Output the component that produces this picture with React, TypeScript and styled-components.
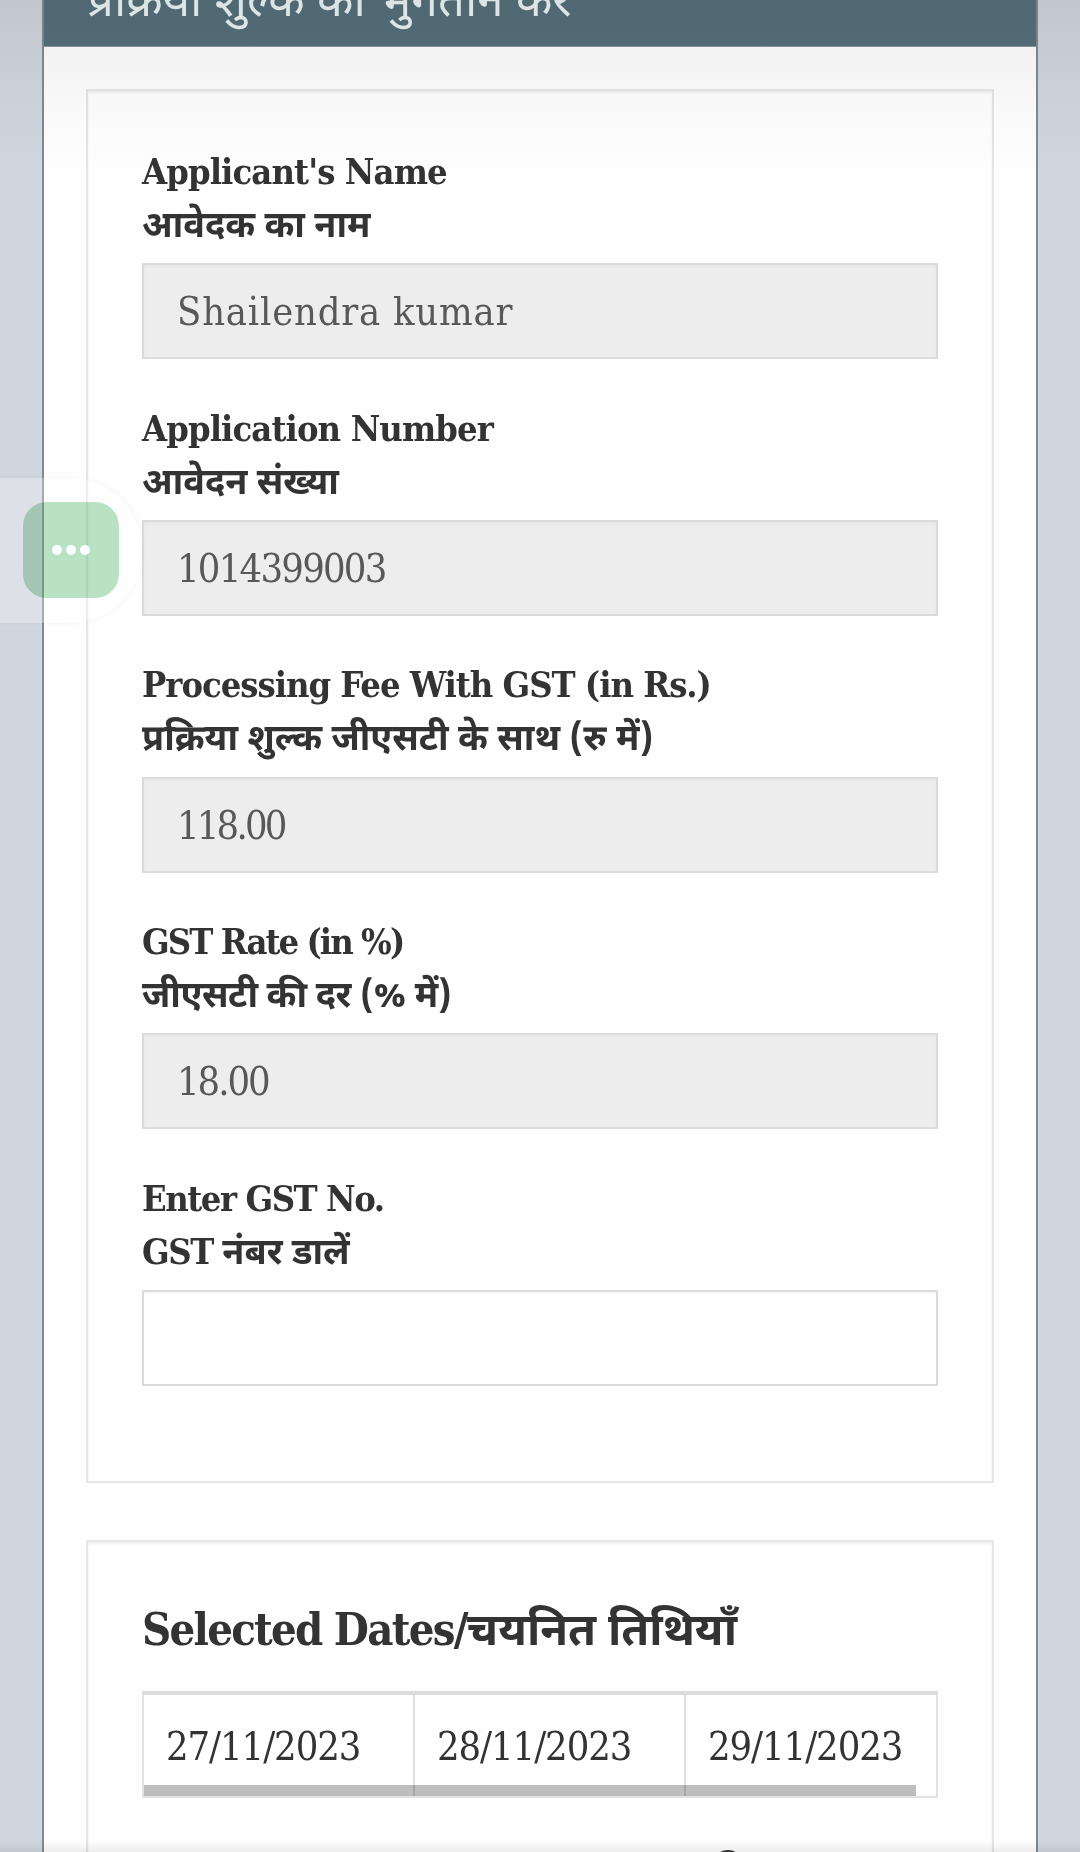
import React from "react";
import styled, { createGlobalStyle } from "styled-components";

const SERIF = '"DejaVu Serif Condensed", "Noto Sans Devanagari", "Noto Sans", serif';
const DEVANAGARI = '"Noto Sans Devanagari", "Noto Sans", sans-serif';

const GlobalStyle = createGlobalStyle`
  * { box-sizing: border-box; }
  html, body { margin: 0; padding: 0; background: #d1d5df; overflow: hidden; }
`;

const Screen = styled.div`
  position: relative;
  width: 1080px;
  height: 1852px;
  overflow: hidden;
  padding: 0 42px;
  background: #d1d5df;
  font-family: ${SERIF};
  color: #333;
`;

const Page = styled.main`
  width: 996px;
  height: 1852px;
  background: #fefefe;
  border: solid #7f8b94;
  border-width: 0 2px;
  display: flex;
  flex-direction: column;
  overflow: hidden;
`;

const TitleBar = styled.header`
  flex: none;
  height: 47px;
  display: flex;
  align-items: flex-end;
  padding: 0 44px 11px;
  margin: 0 -1px;
  overflow: hidden;
  background: #556f7a;
  border-bottom: 1px solid #8a999f;
`;

const Title = styled.h1`
  margin: 0;
  font: 400 47.4px/60px ${DEVANAGARI};
  color: #ecf5f6;
  white-space: nowrap;
`;

const Panel = styled.section<{ $gap: number; $height: number; $top: number }>`
  flex: none;
  width: 908px;
  height: ${(p) => p.$height}px;
  margin: ${(p) => p.$gap}px 0 0 42px;
  padding: ${(p) => p.$top}px 54px 0;
  border: 2px solid #e6e6e6;
  box-shadow: inset 0 2px 2px rgba(0, 0, 0, 0.05);
`;

const Field = styled.label`
  display: block;
  height: 256.7px;
`;

const LabelLine = styled.span<{ $spacing?: number }>`
  display: block;
  height: 52px;
  font-size: 36px;
  font-weight: 700;
  line-height: 51px;
  letter-spacing: ${(p) => p.$spacing ?? 0}px;
  white-space: nowrap;
`;

const HindiLine = styled(LabelLine)<{ $mixed?: boolean }>`
  padding-top: ${(p) => (p.$mixed ? 0 : 5)}px;
  line-height: 52px;
  font-family: ${DEVANAGARI};
`;

const Latin = styled.span`
  font-family: ${SERIF};
  letter-spacing: -1.4px;
`;

const Input = styled.input<{ $spacing: number }>`
  display: block;
  width: 796px;
  height: 96px;
  margin-top: 13.4px;
  padding: 0 33px;
  border: 2px solid #dbdbdb;
  border-radius: 0;
  outline: 0;
  background: #fff;
  box-shadow: inset 0 2px 3px rgba(0, 0, 0, 0.03);
  color: #585858;
  font: 400 39.5px ${SERIF};
  letter-spacing: ${(p) => p.$spacing}px;

  &:read-only {
    background: #ededed;
  }
`;

const Heading = styled.h2`
  margin: 0;
  height: 66px;
  font: 700 45px/66px ${SERIF};
  letter-spacing: -1.75px;
  white-space: nowrap;
`;

const HeadingHindi = styled.span`
  font-family: ${DEVANAGARI};
  font-size: 45.3px;
  letter-spacing: 0;
`;

const TableScroller = styled.div`
  position: relative;
  width: 796px;
  height: 107px;
  margin-top: 28px;
  border: 2px solid #e2e2e2;
  border-top: 4px solid #dcdcdc;
  overflow: hidden;
`;

const DateRow = styled.div`
  display: grid;
  grid-template-columns: 271px 271px 271px;
  height: 100%;
`;

const DateCell = styled.div`
  padding: 24px 0 0 22px;
  border-right: 2px solid #dedede;
  font-size: 39.5px;
  line-height: 54px;
  letter-spacing: -1.05px;
  white-space: nowrap;
`;

const ScrollThumb = styled.div`
  position: absolute;
  left: 0;
  bottom: 0;
  width: 772px;
  height: 11px;
  background: rgba(0, 0, 0, 0.25);
`;

const Handle = styled.div`
  position: absolute;
  left: -10px;
  top: 478px;
  width: 152px;
  height: 145px;
  border-radius: 0 72px 72px 0;
  background: rgba(254, 254, 254, 0.28);
  box-shadow: 0 0 9px rgba(0, 0, 0, 0.035);
`;

const HandleTile = styled.div`
  position: absolute;
  left: 23px;
  top: 501.5px;
  width: 96px;
  height: 96px;
  border-radius: 24px;
  background: #bae2c5;
  mix-blend-mode: multiply;
`;

const HandleDots = styled.div`
  position: absolute;
  left: 23px;
  top: 501px;
  width: 96px;
  height: 97px;
  display: flex;
  align-items: center;
  justify-content: center;
  gap: 4px;
`;

const Dot = styled.i`
  width: 10px;
  height: 10px;
  border-radius: 50%;
  background: rgba(255, 255, 255, 0.96);
`;

const TopShade = styled.div`
  position: absolute;
  inset: 0 0 auto;
  height: 172px;
  background: linear-gradient(rgba(20, 20, 20, 0.08), rgba(20, 20, 20, 0.032) 50%, transparent);
  pointer-events: none;
`;

const BottomShade = styled.div`
  position: absolute;
  inset: auto 0 0;
  height: 12px;
  background: linear-gradient(transparent, rgba(0, 0, 0, 0.07));
  pointer-events: none;
`;

const NextHeading = styled.svg`
  display: block;
  margin: 51px 0 0 572px;
`;

type FieldData = {
  en: string;
  enSpacing: number;
  hi: React.ReactNode;
  hiSpacing?: number;
  mixed?: boolean;
  value: string;
  spacing: number;
  editable?: boolean;
};

const fields: FieldData[] = [
  {
    en: "Applicant's Name",
    enSpacing: -0.9,
    hi: "आवेदक का नाम",
    value: "Shailendra kumar",
    spacing: 0.8,
  },
  {
    en: "Application Number",
    enSpacing: -0.9,
    hi: "आवेदन संख्या",
    value: "1014399003",
    spacing: -1.75,
  },
  {
    en: "Processing Fee With GST (in Rs.)",
    enSpacing: -1.02,
    hi: "प्रक्रिया शुल्क जीएसटी के साथ (रु में)",
    value: "118.00",
    spacing: -2.8,
  },
  {
    en: "GST Rate (in %)",
    enSpacing: -1.95,
    hi: "जीएसटी की दर (% में)",
    hiSpacing: -0.4,
    value: "18.00",
    spacing: -2,
  },
  {
    en: "Enter GST No.",
    enSpacing: -1.45,
    hi: (
      <>
        <Latin>GST</Latin> नंबर डालें
      </>
    ),
    mixed: true,
    value: "",
    spacing: 0,
    editable: true,
  },
];

const dates = ["27/11/2023", "28/11/2023", "29/11/2023"];

export default function App() {
  return (
    <>
      <GlobalStyle />
      <Screen>
        <Page>
          <TitleBar>
            <Title>प्रक्रिया शुल्क का भुगतान करें</Title>
          </TitleBar>
          <Panel $gap={42} $height={1394} $top={55}>
            {fields.map((f) => (
              <Field key={f.en}>
                <LabelLine $spacing={f.enSpacing}>{f.en}</LabelLine>
                <HindiLine $mixed={f.mixed} $spacing={f.hiSpacing}>
                  {f.hi}
                </HindiLine>
                <Input defaultValue={f.value} readOnly={!f.editable} $spacing={f.spacing} />
              </Field>
            ))}
          </Panel>
          <Panel $gap={57} $height={400} $top={55}>
            <Heading>
              Selected Dates/<HeadingHindi>चयनित तिथियाँ</HeadingHindi>
            </Heading>
            <TableScroller>
              <DateRow>
                {dates.map((d) => (
                  <DateCell key={d}>{d}</DateCell>
                ))}
              </DateRow>
              <ScrollThumb />
            </TableScroller>
            <NextHeading width="30" height="20" viewBox="0 0 30 20">
              <path d="M3 14 Q4 3 14 3 Q22 3 28 12" fill="none" stroke="#333" strokeWidth="4" />
            </NextHeading>
          </Panel>
        </Page>
        <TopShade />
        <BottomShade />
        <Handle />
        <HandleTile />
        <HandleDots>
          <Dot />
          <Dot />
          <Dot />
        </HandleDots>
      </Screen>
    </>
  );
}
